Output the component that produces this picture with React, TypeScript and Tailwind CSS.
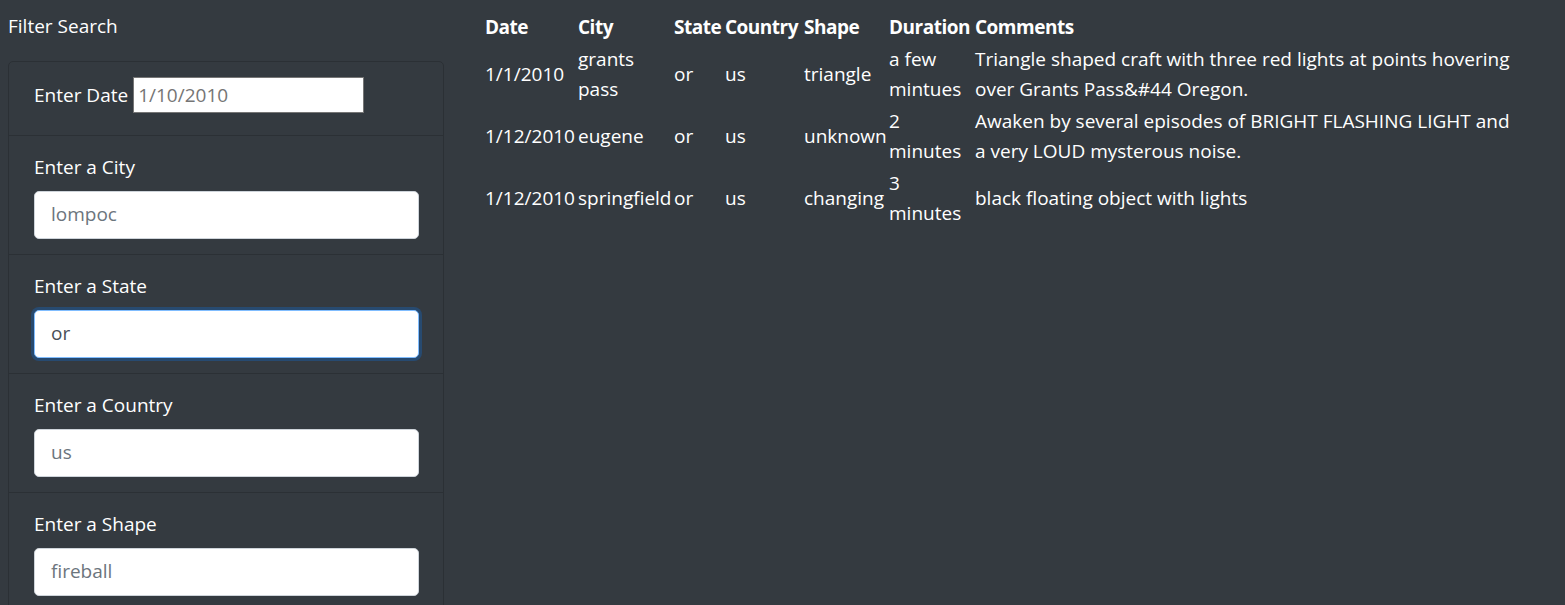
import React from "react";

const rows = [
  { date: "1/1/2010", city: "grants pass", state: "or", country: "us", shape: "triangle", duration: "a few mintues", comments: "Triangle shaped craft with three red lights at points hovering over Grants Pass&#44 Oregon." },
  { date: "1/12/2010", city: "eugene", state: "or", country: "us", shape: "unknown", duration: "2 minutes", comments: "Awaken by several episodes of BRIGHT FLASHING LIGHT and a very LOUD mysterous noise." },
  { date: "1/12/2010", city: "springfield", state: "or", country: "us", shape: "changing", duration: "3 minutes", comments: "black floating object with lights" },
];

function Field({ label, placeholder, value, focused }: { label: string; placeholder?: string; value?: string; focused?: boolean }) {
  return (
    <div className="border-t border-[#2b3035] pl-[25px] pr-[24px] pt-[16px] pb-[15px]">
      <div className="h-[30px] leading-[30px] mb-[9px] text-white">{label}</div>
      <div
        className={
          "h-[48px] rounded-[5px] bg-white flex items-center px-[16px] " +
          (focused
            ? "border border-[#80bdff] shadow-[0_0_0_3px_rgba(0,123,255,0.25)] text-[#495057]"
            : "border border-[#ced4da] text-[#6c757d]")
        }
      >
        {value ?? placeholder}
      </div>
    </div>
  );
}

export default function App() {
  const font = { fontFamily: '"Open Sans", "Noto Sans", sans-serif' };
  return (
    <div className="w-[1565px] h-[605px] bg-[#343a40] overflow-hidden text-[19px] text-white" style={font}>
      <div className="flex">
        <div className="w-[452px] pl-[8px] pr-[8px] shrink-0">
          <div className="h-[30px] leading-[30px] mt-[11px] mb-[20px]">Filter Search</div>
          <div className="border border-[#2b3035] rounded-[5px] [&>div:first-child]:border-t-0">
            <div className="px-[25px] pt-[15px] pb-[21.5px] flex items-center">
              <span className="h-[30px] leading-[30px] mr-[5px]">Enter Date</span>
              <div className="w-[231px] h-[36px] bg-white border border-[#767676] text-[#757575] flex items-center px-[4px]">1/10/2010</div>
            </div>
            <Field label="Enter a City" placeholder="lompoc" />
            <Field label="Enter a State" value="or" focused />
            <Field label="Enter a Country" placeholder="us" />
            <Field label="Enter a Shape" placeholder="fireball" />
          </div>
        </div>
        <div className="pl-[33px] pt-[11px]">
          <table className="border-collapse table-fixed w-[1045px]">
            <colgroup>
              <col className="w-[93px]" />
              <col className="w-[96px]" />
              <col className="w-[51px]" />
              <col className="w-[79px]" />
              <col className="w-[85px]" />
              <col className="w-[86px]" />
              <col className="w-[555px]" />
            </colgroup>
            <thead>
              <tr className="h-[32px]">
                {["Date", "City", "State", "Country", "Shape", "Duration", "Comments"].map((h) => (
                  <th key={h} className="text-left font-bold p-0 leading-[30px] whitespace-nowrap tracking-[-0.5px]">{h}</th>
                ))}
              </tr>
            </thead>
            <tbody>
              {rows.map((r, i) => (
                <tr key={i} className="h-[62px] align-middle">
                  <td className="p-0 leading-[30px] whitespace-nowrap">{r.date}</td>
                  <td className="p-0 leading-[30px] pr-[20px]">{r.city}</td>
                  <td className="p-0 leading-[30px]">{r.state}</td>
                  <td className="p-0 leading-[30px]">{r.country}</td>
                  <td className="p-0 leading-[30px] whitespace-nowrap">{r.shape}</td>
                  <td className="p-0 leading-[30px] pr-[10px]">{r.duration}</td>
                  <td className="p-0 leading-[30px] pr-[20px]">{r.comments}</td>
                </tr>
              ))}
            </tbody>
          </table>
        </div>
      </div>
    </div>
  );
}
